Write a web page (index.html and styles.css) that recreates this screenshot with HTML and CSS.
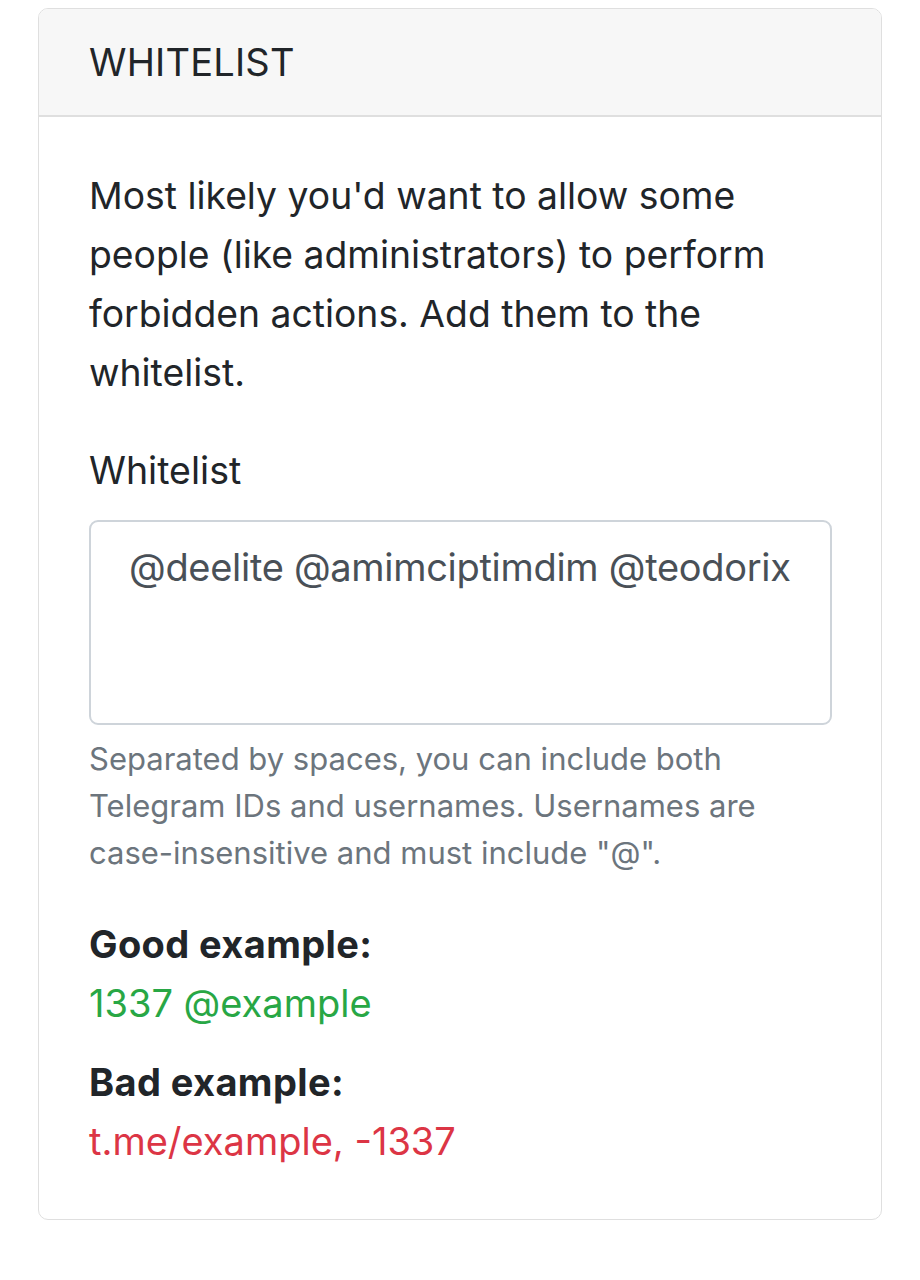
FILE: index.html
```html
<!DOCTYPE html>
<html lang="en">
<head>
<meta charset="utf-8">
<title>Whitelist</title>
<link rel="stylesheet" href="styles.css">
</head>
<body>
<div class="page">
  <div class="card">
    <div class="card-header">Whitelist</div>
    <div class="card-body">
      <p class="intro">Most likely you'd want to allow some people (like administrators) to perform forbidden actions. Add them to the whitelist.</p>
      <div class="form-group">
        <label class="label" for="wl">Whitelist</label>
        <textarea id="wl" class="textarea">@deelite @amimciptimdim @teodorix</textarea>
        <small class="help">Separated by spaces, you can include both Telegram IDs and usernames. Usernames are case-insensitive and must include "@".</small>
      </div>
      <div class="example">
        <div class="ex-title">Good example:</div>
        <div class="ex-good">1337 @example</div>
      </div>
      <div class="example">
        <div class="ex-title">Bad example:</div>
        <div class="ex-bad">t.me/example, -1337</div>
      </div>
    </div>
  </div>
</div>
</body>
</html>
```

FILE: styles.css
```css
html, body {
  margin: 0;
  padding: 0;
  background: #ffffff;
}
body {
  font-family: Inter, "Noto Sans", "Liberation Sans", sans-serif;
  color: #212529;
}
.page {
  padding: 8px 38px 60px 38px;
}
.card {
  border: 1px solid #dfdfdf;
  border-radius: 10px;
  background: #fff;
  overflow: hidden;
}
.card-header {
  background: #f7f7f7;
  border-bottom: 2px solid #dfdfdf;
  padding: 0 50px;
  height: 106px;
  display: flex;
  align-items: center;
  text-transform: uppercase;
  font-size: 38px;
  letter-spacing: 0.2px;
}
.card-body {
  padding: 49px 49px 48px 50px;
}
.intro {
  margin: 0 0 39px 0;
  font-size: 37.3px;
  line-height: 59px;
}
.form-group {
  margin-bottom: 39px;
}
.label {
  display: block;
  font-size: 37.5px;
  line-height: 59px;
  margin-bottom: 20px;
}
.textarea {
  display: block;
  box-sizing: border-box;
  width: 100%;
  height: 205px;
  border: 2px solid #ced4da;
  border-radius: 9px;
  padding: 16px 30px 15px 38px;
  font-family: Inter, "Noto Sans", "Liberation Sans", sans-serif;
  font-size: 38px;
  line-height: 59px;
  color: #495057;
  resize: none;
  background: #fff;
  letter-spacing: -0.3px;
}
.help {
  display: block;
  margin-top: 10px;
  font-size: 31px;
  line-height: 47px;
  color: #6c757d;
}
.example + .example {
  margin-top: 20px;
}
.ex-title {
  font-weight: 700;
  font-size: 38px;
  line-height: 59px;
  letter-spacing: 0.4px;
}
.ex-good, .ex-bad {
  font-size: 38px;
  line-height: 59px;
}
.ex-good { color: #28a745; }
.ex-bad { color: #dc3545; }
```
